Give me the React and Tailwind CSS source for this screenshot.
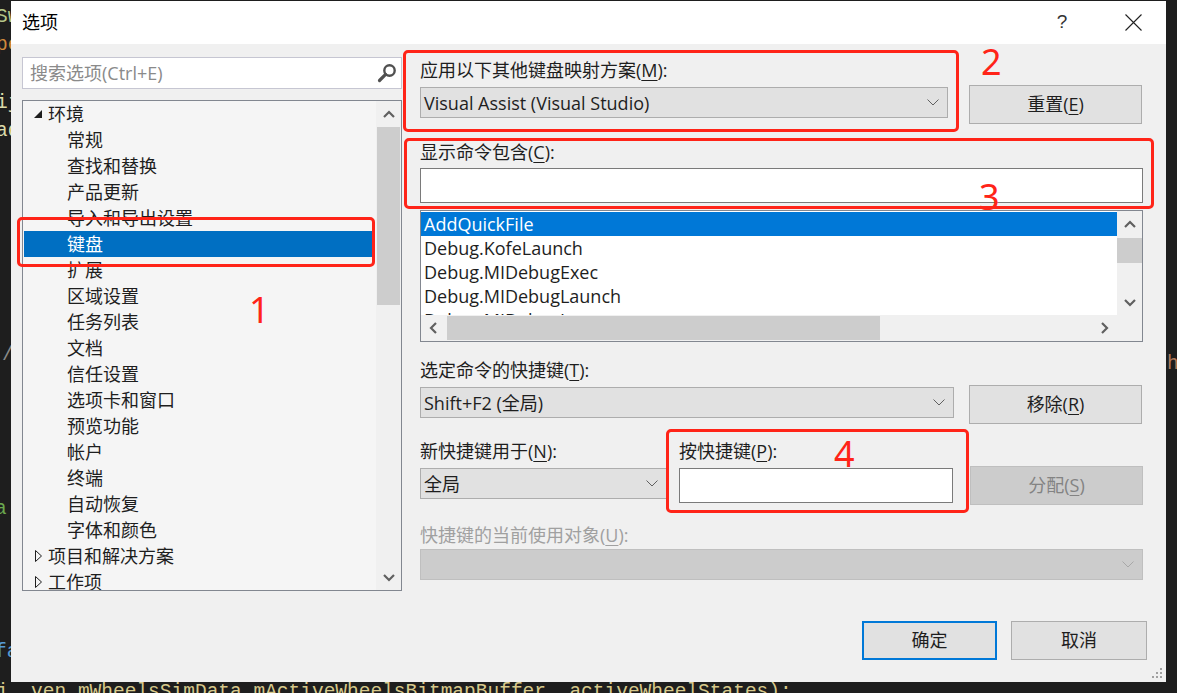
import React from "react";

function ChevDownThin({ className = "" }) {
  return (
    <svg width="12" height="7" viewBox="0 0 12 7" className={className}>
      <polyline points="0.5,0.5 6,6 11.5,0.5" fill="none" stroke="currentColor" strokeWidth="1" />
    </svg>
  );
}

function Arrow({ dir }) {
  const pts = {
    up: "1,7 6,2 11,7",
    down: "1,2 6,7 11,2",
    left: "7,1 2,6 7,11",
    right: "3,1 8,6 3,11",
  }[dir];
  const vert = dir === "up" || dir === "down";
  return (
    <svg width={vert ? 12 : 10} height={vert ? 9 : 12} viewBox={vert ? "0 0 12 9" : "0 0 10 12"} className="text-[#606060]">
      <polyline points={pts} fill="none" stroke="currentColor" strokeWidth="2.2" />
    </svg>
  );
}

function U({ children }) {
  return <span className="underline underline-offset-[3px] decoration-1">{children}</span>;
}

function Combo({ text, w, disabled, chevronClass = "text-[#606060]" }) {
  return (
    <div
      className={`flex items-center h-[31px] pl-[3px] pr-[8px] border ${
        disabled ? "bg-[#cccccc] border-[#bfbfbf]" : "bg-[#e1e1e1] border-[#adadad]"
      } ${w}`}
    >
      <span className="flex-1 leading-[26px] whitespace-nowrap">{text}</span>
      <ChevDownThin className={disabled ? "text-[#a8a8a8]" : chevronClass} />
    </div>
  );
}

function Btn({ children, disabled, cls = "" }) {
  return (
    <div
      className={`flex items-center justify-center h-[39px] w-[173px] border ${
        disabled ? "bg-[#cccccc] border-[#bfbfbf] text-[#838383]" : "bg-[#e1e1e1] border-[#adadad]"
      } ${cls}`}
    >
      {children}
    </div>
  );
}

const treeItems = [
  { t: "环境", lvl: 0, open: true },
  { t: "常规", lvl: 1 },
  { t: "查找和替换", lvl: 1 },
  { t: "产品更新", lvl: 1 },
  { t: "导入和导出设置", lvl: 1 },
  { t: "键盘", lvl: 1, sel: true },
  { t: "扩展", lvl: 1 },
  { t: "区域设置", lvl: 1 },
  { t: "任务列表", lvl: 1 },
  { t: "文档", lvl: 1 },
  { t: "信任设置", lvl: 1 },
  { t: "选项卡和窗口", lvl: 1 },
  { t: "预览功能", lvl: 1 },
  { t: "帐户", lvl: 1 },
  { t: "终端", lvl: 1 },
  { t: "自动恢复", lvl: 1 },
  { t: "字体和颜色", lvl: 1 },
  { t: "项目和解决方案", lvl: 0 },
  { t: "工作项", lvl: 0 },
];

const listItems = ["AddQuickFile", "Debug.KofeLaunch", "Debug.MIDebugExec", "Debug.MIDebugLaunch", "Debug.MIDebugLog"];

function Tree() {
  return (
    <div className="flex h-[491px] border border-[#828790] bg-[#f5f5f5] overflow-hidden">
      <div className="flex-1 overflow-hidden">
        {treeItems.map((it, i) => (
          <div
            key={i}
            className={`flex items-center h-[26px] ml-[1px] mr-[3px] leading-[26px] whitespace-nowrap ${
              it.sel ? "bg-[#006fc2] text-white" : "text-[#1e1e1e]"
            }`}
          >
            {it.lvl === 0 ? (
              <>
                <span className="w-[24px] flex justify-end pr-[6px]">
                  {it.open ? (
                    <svg width="8" height="8" viewBox="0 0 8 8">
                      <polygon points="8,0 8,8 0,8" fill="#1e1e1e" />
                    </svg>
                  ) : (
                    <svg width="7" height="12" viewBox="0 0 7 12">
                      <polygon points="0.5,0.5 6.5,6 0.5,11.5" fill="none" stroke="#1e1e1e" strokeWidth="1" />
                    </svg>
                  )}
                </span>
                <span>{it.t}</span>
              </>
            ) : (
              <span className="ml-[43px]">{it.t}</span>
            )}
          </div>
        ))}
      </div>
      <div className="w-[25px] flex flex-col bg-[#f0f0f0]">
        <div className="h-[26px] flex items-center justify-center">
          <Arrow dir="up" />
        </div>
        <div className="h-[178px] bg-[#cdcdcd] mx-[1px]" />
        <div className="flex-1" />
        <div className="h-[26px] flex items-center justify-center">
          <Arrow dir="down" />
        </div>
      </div>
    </div>
  );
}

function CmdList() {
  return (
    <div className="flex flex-col h-[132px] border border-[#828790] bg-[#f0f0f0]">
      <div className="flex h-[104px]">
        <div className="flex-1 bg-white overflow-hidden pt-[1px]">
          {listItems.map((t, i) => (
            <div
              key={i}
              className={`h-[24px] leading-[24px] pl-[3px] whitespace-nowrap ${i === 0 ? "bg-[#0078d7] text-white" : "text-[#1e1e1e]"}`}
            >
              {t}
            </div>
          ))}
        </div>
        <div className="w-[25px] flex flex-col">
          <div className="h-[27px] flex items-center justify-center">
            <Arrow dir="up" />
          </div>
          <div className="h-[25px] bg-[#cdcdcd]" />
          <div className="flex-1" />
          <div className="h-[26px] flex items-center justify-center">
            <Arrow dir="down" />
          </div>
        </div>
      </div>
      <div className="flex flex-1">
        <div className="flex flex-1">
          <div className="w-[26px] flex items-center justify-center">
            <Arrow dir="left" />
          </div>
          <div className="w-[433px] bg-[#cdcdcd] my-[1px]" />
          <div className="flex-1" />
          <div className="w-[26px] flex items-center justify-center">
            <Arrow dir="right" />
          </div>
        </div>
        <div className="w-[25px]" />
      </div>
    </div>
  );
}

function Annot({ cls }) {
  return <div className={`absolute border-[3px] border-[#ff2418] rounded-[5px] ${cls}`} />;
}

function Num({ n, cls }) {
  return (
    <div className={`absolute text-[36px] leading-none text-[#ff2418] font-['Noto_Sans','Open_Sans',sans-serif] ${cls}`}>{n}</div>
  );
}

export default function App() {
  return (
    <div className="relative w-[1177px] h-[693px] overflow-hidden bg-[#1e1e1e] font-['Open_Sans','Noto_Sans_CJK_SC',sans-serif] text-[18px] text-[#1e1e1e]">
      {/* editor text behind the dialog */}
      <div className="absolute inset-0 font-['Liberation_Mono','Noto_Sans_CJK_SC',monospace] text-[19.5px] leading-none">
        <div className="absolute left-[-4px] top-[8px] text-[#b5c78a]">Sw</div>
        <div className="absolute left-[-4px] top-[36px] text-[#d08a3c]">pe</div>
        <div className="absolute left-[-4px] top-[94px] text-[#dcdcaa]">ij</div>
        <div className="absolute left-[-4px] top-[122px] text-[#dcdcaa]">ad</div>
        <div className="absolute left-[2px] top-[346px] text-[#8a8a8a]">/</div>
        <div className="absolute left-[-5px] top-[500px] text-[#6aa84f]">a</div>
        <div className="absolute left-[-5px] top-[643px] text-[#569cd6]">fa</div>
        <div className="absolute left-[1167px] top-[355px] text-[#b07a5a]">h</div>
        <div className="absolute left-[-4px] top-[683px] whitespace-pre text-[#d7c98b]">
          {"j, ven.mWheelsSimData.mActiveWheelsBitmapBuffer, activeWheelStates);"}
        </div>
      </div>

      {/* dialog window */}
      <div className="absolute left-[11px] top-[1px] w-[1155px] h-[681px] flex flex-col bg-[#f0f0f0]">
        {/* title bar */}
        <div className="flex items-center h-[43px] bg-white pl-[11px]">
          <span className="flex-1 text-[18px] text-black">选项</span>
          <span className="w-[30px] text-center text-[19px] text-[#333] mr-[33px] font-['Liberation_Sans',sans-serif]">?</span>
          <span className="w-[46px] flex justify-center mr-[10px]">
            <svg width="17" height="17" viewBox="0 0 17 17">
              <path d="M0.5 0.5 L16.5 16.5 M16.5 0.5 L0.5 16.5" stroke="#222" strokeWidth="1.1" />
            </svg>
          </span>
        </div>

        {/* body */}
        <div className="flex">
          {/* left column */}
          <div className="ml-[11px] mt-[13px] w-[380px] flex flex-col">
            <div className="flex items-center h-[32px] border border-[#c6c6d2] bg-white pl-[7px] pr-[4px]">
              <span className="flex-1 text-[#8a8a8a] whitespace-nowrap">搜索选项(Ctrl+E)</span>
              <svg width="20" height="20" viewBox="0 0 20 20">
                <circle cx="12.5" cy="7.5" r="5.2" fill="none" stroke="#505050" strokeWidth="2.4" />
                <path d="M8.6 11.4 L2.5 17.5" stroke="#505050" strokeWidth="3.2" strokeLinecap="round" />
              </svg>
            </div>
            <div className="mt-[11px]">
              <Tree />
            </div>
          </div>

          {/* right column */}
          <div className="ml-[18px] mt-[13px] w-[723px] flex flex-col">
            <div className="h-[26px] leading-[26px] whitespace-nowrap">
              应用以下其他键盘映射方案(<U>M</U>):
            </div>
            <div className="flex mt-[2px] h-[39px]">
              <div className="mt-[2px]">
                <Combo text="Visual Assist (Visual Studio)" w="w-[528px]" />
              </div>
              <Btn cls="ml-[21px]">
                重置(<U>E</U>)
              </Btn>
            </div>

            <div className="h-[26px] leading-[26px] mt-[15px] whitespace-nowrap">
              显示命令包含(<U>C</U>):
            </div>
            <div className="mt-[3px] h-[35px] border border-[#7a7a7a] bg-white" />

            <div className="mt-[7px]">
              <CmdList />
            </div>

            <div className="h-[26px] leading-[26px] mt-[15px] whitespace-nowrap">
              选定命令的快捷键(<U>T</U>):
            </div>
            <div className="flex mt-[2px] h-[39px]">
              <div className="mt-[2px]">
                <Combo text="Shift+F2 (全局)" w="w-[534px]" />
              </div>
              <Btn cls="ml-[15px]">
                移除(<U>R</U>)
              </Btn>
            </div>

            <div className="flex mt-[14px]">
              <div className="w-[247px] flex flex-col">
                <div className="h-[26px] leading-[26px] whitespace-nowrap">
                  新快捷键用于(<U>N</U>):
                </div>
                <div className="mt-[4px]">
                  <Combo text="全局" w="w-[247px]" />
                </div>
              </div>
              <div className="ml-[12px] w-[274px] flex flex-col">
                <div className="h-[26px] leading-[26px] whitespace-nowrap">
                  按快捷键(<U>P</U>):
                </div>
                <div className="mt-[4px] h-[35px] border border-[#7a7a7a] bg-white" />
              </div>
              <div className="ml-[17px] mt-[28px]">
                <Btn disabled cls="w-[172px]">
                  分配(<U>S</U>)
                </Btn>
              </div>
            </div>

            <div className="h-[26px] leading-[26px] mt-[17px] whitespace-nowrap text-[#a0a0a0]">
              快捷键的当前使用对象(<U>U</U>):
            </div>
            <div className="mt-[1px]">
              <Combo text="" w="w-[723px]" disabled />
            </div>
          </div>
        </div>

        {/* footer */}
        <div className="mt-auto mb-[22px] flex justify-end pr-[19px]">
          <div className="flex items-center justify-center w-[135px] h-[39px] bg-[#e1e1e1] border-2 border-[#0078d7]">确定</div>
          <div className="ml-[14px] flex items-center justify-center w-[136px] h-[39px] bg-[#e1e1e1] border border-[#adadad]">取消</div>
        </div>

        {/* resize grip */}
        <svg className="absolute right-[3px] bottom-[2px]" width="12" height="12" viewBox="0 0 12 12">
          <g fill="#a0a0a0">
            <rect x="9" y="0" width="2" height="2" />
            <rect x="5" y="4" width="2" height="2" />
            <rect x="9" y="4" width="2" height="2" />
            <rect x="1" y="8" width="2" height="2" />
            <rect x="5" y="8" width="2" height="2" />
            <rect x="9" y="8" width="2" height="2" />
          </g>
        </svg>
      </div>

      {/* red annotations */}
      <Annot cls="left-[17px] top-[217px] w-[358px] h-[50px]" />
      <Annot cls="left-[403px] top-[50px] w-[556px] h-[82px]" />
      <Annot cls="left-[404px] top-[138px] w-[750px] h-[71px]" />
      <Annot cls="left-[666px] top-[429px] w-[303px] h-[84px]" />
      <Num n="1" cls="left-[249px] top-[292px]" />
      <Num n="2" cls="left-[981px] top-[44px]" />
      <Num n="3" cls="left-[979px] top-[179px]" />
      <Num n="4" cls="left-[834px] top-[436px]" />
    </div>
  );
}
